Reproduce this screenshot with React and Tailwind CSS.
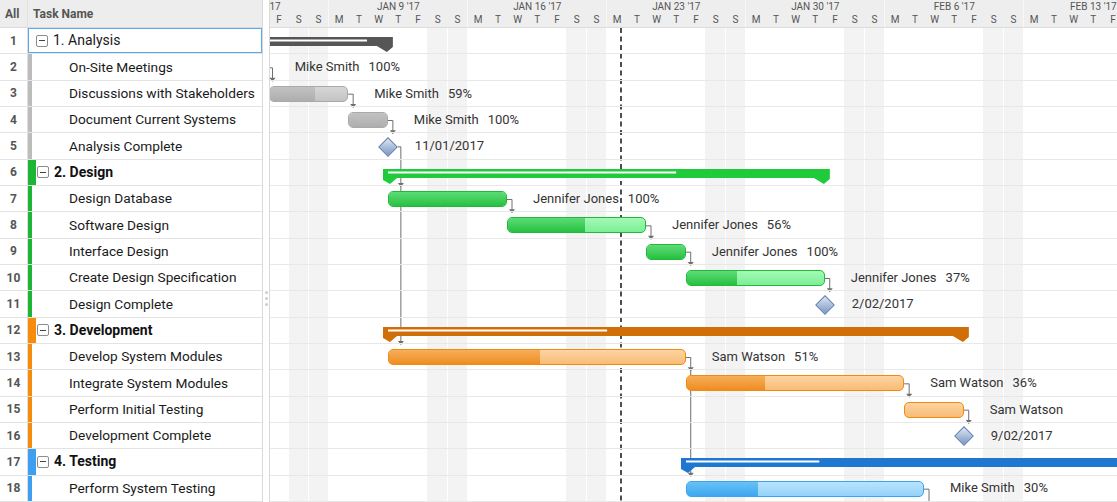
import React from "react";

const ROW = 26.333;
const DW = 139 / 7;
const X0 = -80.7;
const dx = (i) => X0 + i * DW;
const top = (r) => (r - 1) * ROW;
const mid = (r) => top(r) + 13.5;

const G = {
  gray: {
    strip: "bg-[#bcbcbc]",
    bar: "border-[#a9a9a9] bg-linear-to-b from-[#d6d6d6] to-[#c4c4c4]",
    prog: "bg-linear-to-b from-[#c2c2c2] to-[#aeaeae]",
    sum: "#565656",
  },
  green: {
    strip: "bg-[#1db535]",
    bar: "border-[#22b83c] bg-linear-to-b from-[#a2fab5] to-[#7cee97]",
    prog: "bg-linear-to-b from-[#5bdc75] to-[#24c140]",
    sum: "#1fcb3b",
  },
  orange: {
    strip: "bg-[#f68b0c]",
    bar: "border-[#f08a10] bg-linear-to-b from-[#fcd4a2] to-[#f8bc76]",
    prog: "bg-linear-to-b from-[#f6ae58] to-[#ee8d1d]",
    sum: "#d06e08",
  },
  blue: {
    strip: "bg-[#3e9ef0]",
    bar: "border-[#3ca3ee] bg-linear-to-b from-[#b8e4fd] to-[#94d2f9]",
    prog: "bg-linear-to-b from-[#66c2f6] to-[#3da7ef]",
    sum: "#1f77d0",
  },
};

const rows = [
  { n: 1, name: "1. Analysis", type: "summary", g: "gray", sel: true, from: -30, to: dx(10) + 5, prog: 97 },
  { n: 2, name: "On-Site Meetings", type: "task", g: "gray", a: 1, b: 4, pct: 100, who: "Mike Smith" },
  { n: 3, name: "Discussions with Stakeholders", type: "task", g: "gray", a: 4, b: 8, pct: 59, who: "Mike Smith" },
  { n: 4, name: "Document Current Systems", type: "task", g: "gray", a: 8, b: 10, pct: 100, who: "Mike Smith" },
  { n: 5, name: "Analysis Complete", type: "ms", g: "gray", at: 10, date: "11/01/2017" },
  { n: 6, name: "2. Design", type: "summary", g: "green", from: dx(10) - 5, to: dx(32) + 5, prog: 406 },
  { n: 7, name: "Design Database", type: "task", g: "green", a: 10, b: 16, pct: 100, who: "Jennifer Jones" },
  { n: 8, name: "Software Design", type: "task", g: "green", a: 16, b: 23, pct: 56, who: "Jennifer Jones" },
  { n: 9, name: "Interface Design", type: "task", g: "green", a: 23, b: 25, pct: 100, who: "Jennifer Jones" },
  { n: 10, name: "Create Design Specification", type: "task", g: "green", a: 25, b: 32, pct: 37, who: "Jennifer Jones" },
  { n: 11, name: "Design Complete", type: "ms", g: "green", at: 32, date: "2/02/2017" },
  { n: 12, name: "3. Development", type: "summary", g: "orange", from: dx(10) - 5, to: dx(39) + 5, prog: 337 },
  { n: 13, name: "Develop System Modules", type: "task", g: "orange", a: 10, b: 25, pct: 51, who: "Sam Watson" },
  { n: 14, name: "Integrate System Modules", type: "task", g: "orange", a: 25, b: 36, pct: 36, who: "Sam Watson" },
  { n: 15, name: "Perform Initial Testing", type: "task", g: "orange", a: 36, b: 39, pct: 0, who: "Sam Watson", noPct: true },
  { n: 16, name: "Development Complete", type: "ms", g: "orange", at: 39, date: "9/02/2017" },
  { n: 17, name: "4. Testing", type: "summary", g: "blue", from: dx(25) - 5, to: dx(62), prog: 549 },
  { n: 18, name: "Perform System Testing", type: "task", g: "blue", a: 25, b: 37, pct: 30, who: "Mike Smith" },
];

const weeks = ["JAN 2 '17", "JAN 9 '17", "JAN 16 '17", "JAN 23 '17", "JAN 30 '17", "FEB 6 '17", "FEB 13 '17", "FEB 20 '17"];
const days = ["M", "T", "W", "T", "F", "S", "S"];

function Collapse() {
  return (
    <span className="w-[12px] h-[12px] shrink-0 border border-[#8c8c8c] rounded-[2px] flex items-center justify-center bg-white">
      <span className="w-[6px] h-px bg-[#444]" />
    </span>
  );
}

function LeftRow({ r }) {
  const g = G[r.g];
  return (
    <div className="flex h-[26.33px] border-b border-[#e3e3e3]">
      <div className="w-[28px] shrink-0 border-r border-[#dedede] flex items-center justify-center text-[12px] font-bold text-[#555]">
        {r.n}
      </div>
      {r.sel ? (
        <div className="flex-1 flex items-center border border-[#5aa8ee] pl-[7px] gap-[5px] text-[14px] text-[#1a1a1a]">
          <Collapse />
          <span>{r.name}</span>
        </div>
      ) : r.type === "summary" ? (
        <div className="flex-1 flex items-center text-[14px] font-bold text-[#111]">
          <div className={"w-[8px] h-full " + g.strip} />
          <div className="ml-px">
            <Collapse />
          </div>
          <span className="ml-[5px]">{r.name}</span>
        </div>
      ) : (
        <div className="flex-1 flex items-center text-[13.7px] text-[#1a1a1a]">
          <div className={"w-[4px] h-full " + g.strip} />
          <span className="ml-[37px] whitespace-nowrap">{r.name}</span>
        </div>
      )}
    </div>
  );
}

function SummaryBar({ r }) {
  const g = G[r.g];
  const w = r.to - r.from;
  const h = 9;
  const pts = `0,0 ${w},0 ${w},${h + 1} ${w - 6},${h + 6} ${w - 16},${h} 14,${h} 7,${h + 6} 0,${h + 2}`;
  return (
    <svg className="absolute top-[9px]" style={{ left: r.from }} width={w} height={h + 7}>
      <polygon points={pts} fill={g.sum} />
      <rect x={5} y={2.5} width={Math.max(0, r.prog - r.from - 5)} height={2} fill="#ffffff" />
    </svg>
  );
}

function TaskBar({ r }) {
  const g = G[r.g];
  const l = dx(r.a);
  const w = dx(r.b) - l;
  return (
    <>
      <div
        className={"absolute top-[5px] h-[16px] rounded-[5px] border overflow-hidden " + g.bar}
        style={{ left: l, width: w }}
      >
        <div className={"h-full " + g.prog} style={{ width: r.pct + "%" }} />
      </div>
      <div
        className="absolute top-0 h-full flex items-center gap-[9px] text-[13px] text-[#333] whitespace-nowrap"
        style={{ left: dx(r.b) + 26 }}
      >
        <span>{r.who}</span>
        {!r.noPct && <span>{r.pct}%</span>}
      </div>
    </>
  );
}

function Milestone({ r }) {
  const x = dx(r.at);
  return (
    <>
      <div
        className="absolute top-[6.5px] w-[14px] h-[14px] rotate-45 border border-[#5b7cab] bg-linear-to-br from-[#dde6f3] to-[#7b97c3]"
        style={{ left: x - 7 }}
      />
      <div
        className="absolute top-0 h-full flex items-center text-[13px] text-[#333] whitespace-nowrap"
        style={{ left: x + 27 }}
      >
        {r.date}
      </div>
    </>
  );
}

function Arrow({ x, y }) {
  return <polygon points={`${x - 3},${y - 4} ${x + 3},${y - 4} ${x},${y}`} fill="#6f6f6f" />;
}

function Conn({ x0, r0, r1 }) {
  const x = x0 + 5;
  const y1 = top(r1) + 1;
  return (
    <>
      <path d={`M${x0} ${mid(r0)} H${x} V${y1 - 3}`} stroke="#6f6f6f" strokeWidth="1" fill="none" />
      <Arrow x={x} y={y1} />
    </>
  );
}

function Links() {
  const xd = dx(10) + 10;
  const x13 = dx(25) + 5;
  return (
    <svg className="absolute left-0 top-0" width="847" height="474">
      <line x1={351} y1={0} x2={351} y2={474} stroke="#222" strokeWidth="1.6" strokeDasharray="5 3.5" />
      <path d={`M-5 ${mid(2)} H2.5 V${top(3) - 2}`} stroke="#6f6f6f" strokeWidth="1" fill="none" />
      <Arrow x={2.5} y={top(3) + 1} />
      <Conn x0={dx(8)} r0={3} r1={4} />
      <Conn x0={dx(10)} r0={4} r1={5} />
      <path d={`M${xd} ${mid(5)} H${xd + 3} V${top(13) - 2}`} stroke="#6f6f6f" strokeWidth="1" fill="none" />
      <Arrow x={xd + 3} y={top(7) + 1} />
      <Arrow x={xd + 3} y={top(13) + 1} />
      <Conn x0={dx(16)} r0={7} r1={8} />
      <Conn x0={dx(23)} r0={8} r1={9} />
      <Conn x0={dx(25)} r0={9} r1={10} />
      <Conn x0={dx(32)} r0={10} r1={11} />
      <path d={`M${dx(25)} ${mid(13)} H${x13} V${top(18) - 2}`} stroke="#6f6f6f" strokeWidth="1" fill="none" />
      <Arrow x={x13} y={top(14) + 1} />
      <Arrow x={x13} y={top(18) + 1} />
      <Conn x0={dx(36)} r0={14} r1={15} />
      <Conn x0={dx(39)} r0={15} r1={16} />
      <path d={`M${dx(37)} ${mid(18)} H${dx(37) + 5} V480`} stroke="#6f6f6f" strokeWidth="1" fill="none" />
    </svg>
  );
}

export default function App() {
  const dayCols = [];
  for (let i = 0; i < 56; i++) dayCols.push(i);
  return (
    <div className="w-[1117px] h-[502px] overflow-hidden flex bg-white font-['Roboto',sans-serif]">
      <div className="w-[263px] shrink-0 border-r border-[#d9d9d9] flex flex-col">
        <div className="h-[28px] flex bg-[#ededed] border-b border-[#dadada] text-[12px] font-bold text-[#555]">
          <div className="w-[28px] shrink-0 border-r border-[#e2e2e2] flex items-center pl-[5px]">All</div>
          <div className="flex items-center pl-[5px]">Task Name</div>
        </div>
        {rows.map((r) => (
          <LeftRow key={r.n} r={r} />
        ))}
      </div>
      <div className="w-[7px] shrink-0 border-r border-[#d9d9d9] flex flex-col items-center pt-[291px] gap-[3px]">
        <span className="w-[3px] h-[3px] rounded-full bg-[#cccccc]" />
        <span className="w-[3px] h-[3px] rounded-full bg-[#cccccc]" />
        <span className="w-[3px] h-[3px] rounded-full bg-[#cccccc]" />
      </div>
      <div className="flex-1 overflow-hidden flex flex-col">
        <div className="h-[28px] shrink-0 bg-[#eeeeee] border-b border-[#dcdcdc] overflow-hidden">
          <div className="flex ml-[-80.7px]">
            {weeks.map((w) => (
              <div key={w} className="w-[139px] shrink-0 border-l border-[#f8f8f8] flex flex-col">
                <div className="h-[13px] text-center text-[10px] leading-[13px] text-[#555]">{w}</div>
                <div className="flex h-[14px]">
                  {days.map((d, i) => (
                    <div key={i} className="flex-1 text-center text-[10px] leading-[14px] text-[#555]">
                      {d}
                    </div>
                  ))}
                </div>
              </div>
            ))}
          </div>
        </div>
        <div className="relative flex-1">
          <div className="absolute top-0 bottom-0 left-[-80.7px] flex">
            {dayCols.map((i) => (
              <div
                key={i}
                className={
                  "w-[19.857px] shrink-0 h-full " +
                  (i % 7 === 5 ? "bg-[#f3f3f3]" : i % 7 === 6 ? "bg-[#f3f3f3] border-l border-white" : "")
                }
              />
            ))}
          </div>
          <Links />
          {rows.map((r) => (
            <div key={r.n} className="relative h-[26.33px] border-b border-[#e8e8e8]">
              {r.type === "summary" && <SummaryBar r={r} />}
              {r.type === "task" && <TaskBar r={r} />}
              {r.type === "ms" && <Milestone r={r} />}
            </div>
          ))}
        </div>
      </div>
    </div>
  );
}
